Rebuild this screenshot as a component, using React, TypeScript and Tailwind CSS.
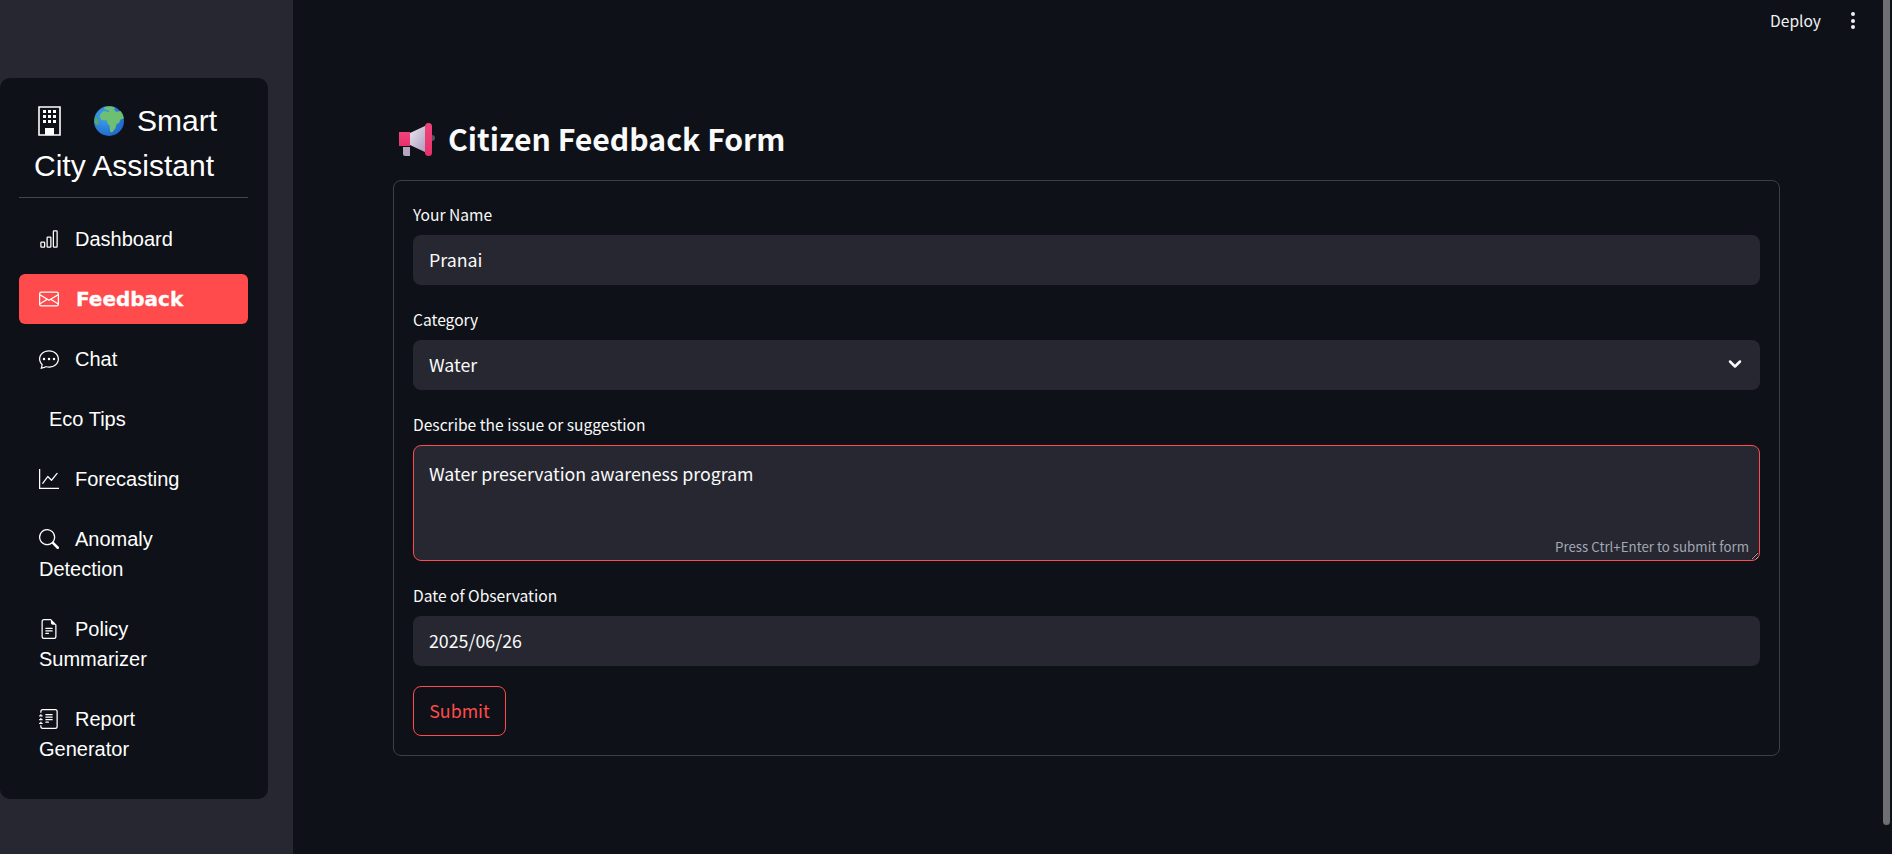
import { ChevronDown } from 'lucide-react';
import {
  BsBarChart,
  BsEnvelope,
  BsChatDots,
  BsGraphUp,
  BsSearch,
  BsFileEarmarkText,
  BsJournalText,
} from 'react-icons/bs';

const BuildingIcon = () => (
  <svg viewBox="0 0 23 30" className="inline-block h-[30px] w-[23px] align-[-5px]">
    <path fill="none" stroke="#fff" strokeWidth="1.6" d="M1 1h21v28H1z" />
    <path fill="#fff" d="M5 4h3v3H5zM10 4h3v3h-3zM15 4h3v3h-3zM5 9h3v3H5zM10 9h3v3h-3zM15 9h3v3h-3zM5 14h3v3H5zM10 14h3v3h-3zM15 14h3v3h-3zM7 22h9v7H7z" />
  </svg>
);

const GlobeIcon = () => (
  <svg viewBox="0 0 30 30" className="inline-block h-[30px] w-[30px] align-[-5px]">
    <defs>
      <radialGradient id="sea" cx="0.35" cy="0.35" r="0.8">
        <stop offset="0" stopColor="#3fa4ee" />
        <stop offset="1" stopColor="#1c5fc4" />
      </radialGradient>
    </defs>
    <circle cx="15" cy="15" r="15" fill="url(#sea)" />
    <path fill="#6fbf73" d="M10 1.5c3-1.2 8-1.3 11 .3l-1 2 2.5 2.2 4-1c2 2 3 5 3.300 7.500l-3.300 1-1.500 3.500-2.500 1-1 4-3 4c-1.500.5-2.500-.2-2.500-1.500l-.5-5-2-2-.5-3-5.500-.5-2-4 3-4.500 3.500-.5 1.500 1.500 2-1-2-1.500-3-.5z" />
    <path fill="#57a862" d="M2 10c-1.200 2-1.800 5-1.500 7l3 2.500 1.500-3z" />
  </svg>
);

const MegaphoneIcon = () => (
  <svg viewBox="0 0 36 33" className="h-[33px] w-[36px] shrink-0">
    <defs>
      <linearGradient id="cone" x1="0" x2="1" y1="0" y2="1">
        <stop offset="0" stopColor="#ece6f2" />
        <stop offset="1" stopColor="#a899b8" />
      </linearGradient>
      <linearGradient id="bell" x1="0" x2="0" y1="0" y2="1">
        <stop offset="0" stopColor="#f0447c" />
        <stop offset="1" stopColor="#e8306a" />
      </linearGradient>
    </defs>
    <path fill="#b3a7bf" d="M4 24h7v9H6a2 2 0 0 1-2-2z" />
    <circle cx="33" cy="15" r="3" fill="#55505f" />
    <path fill="url(#cone)" d="M11 10 28 2v28L11 22z" />
    <path fill="url(#bell)" d="M0 9h11v14H0z" />
    <rect x="26" y="0" width="7" height="33" rx="3.500" fill="url(#bell)" />
  </svg>
);

const navItems = [
  { icon: BsBarChart, lines: ['Dashboard'] },
  { icon: BsEnvelope, lines: ['Feedback'], active: true },
  { icon: BsChatDots, lines: ['Chat'] },
  { icon: null, lines: ['Eco Tips'] },
  { icon: BsGraphUp, lines: ['Forecasting'] },
  { icon: BsSearch, lines: ['Anomaly', 'Detection'] },
  { icon: BsFileEarmarkText, lines: ['Policy', 'Summarizer'] },
  { icon: BsJournalText, lines: ['Report', 'Generator'] },
];

const Sidebar = () => (
  <aside className="h-full w-[293px] shrink-0 bg-[#262730] pt-[78px] pr-[25px]">
    <div className="rounded-[10px] bg-[#0e1117] pt-[20px] pr-[20px] pb-[25px] pl-[19px] font-['Liberation_Sans',sans-serif] text-white">
      <h1 className="pl-[15px] text-[30px] leading-[45px] whitespace-nowrap">
        <span className="ml-[4px]" />
        <BuildingIcon />
        <span className="ml-[33px]" />
        <GlobeIcon />
        <span className="ml-[13px]">Smart</span>
        <br />
        City Assistant
      </h1>
      <div className="mt-[9px] mb-[16px] h-px bg-[#45464d]" />
      <nav className="flex flex-col gap-[10px]">
        {navItems.map(({ icon: Icon, lines, active }) => (
          <a
            key={lines[0]}
            className={
              active
                ? 'rounded-md bg-[#ff4b4b] py-[10px] pl-[20px] text-[20px] leading-[30px]'
                : 'rounded-md py-[10px] pl-[20px] text-[20px] leading-[30px]'
            }
          >
            {Icon ? (
              <Icon className="mr-[16px] inline-block h-[20px] w-[20px] align-[-3px]" />
            ) : (
              <span className="ml-[10px]" />
            )}
            {active ? (
              <span className="ml-px font-['DejaVu_Sans',sans-serif] font-bold [-webkit-text-stroke:0.3px_white]">
                {lines[0]}
              </span>
            ) : (
              lines[0]
            )}
            {lines[1] && (
              <>
                <br />
                {lines[1]}
              </>
            )}
          </a>
        ))}
      </nav>
    </div>
  </aside>
);

const Label = ({ children }: { children: string }) => (
  <label className="mb-[6px] flex h-[28px] items-center text-[15.6px]">{children}</label>
);

export default function App() {
  return (
    <div className="relative flex h-screen w-full overflow-hidden bg-[#0e1117] font-['Noto_Sans_CJK_SC','Noto_Sans',sans-serif] text-[#fafafa]">
      <Sidebar />

      <main className="min-w-0 flex-1">
        <header className="flex h-[41px] items-center justify-end pr-[37px] text-[#f0f0f2]">
          <span className="text-[15.6px]">Deploy</span>
          <span className="ml-[30px] flex flex-col gap-[2.500px]">
            <span className="h-[4px] w-[4px] rounded-full bg-[#f0f0f2]" />
            <span className="h-[4px] w-[4px] rounded-full bg-[#f0f0f2]" />
            <span className="h-[4px] w-[4px] rounded-full bg-[#f0f0f2]" />
          </span>
        </header>

        <div className="pr-[112px] pl-[100px]">
          <h2 className="mt-[65px] mb-[8px] flex h-[66px] items-center gap-[13px] pl-[6px] text-[30.200px] font-semibold">
            <MegaphoneIcon />
            Citizen Feedback Form
          </h2>

          <form className="rounded-lg border border-[#3d4044] px-[19px] pt-[20px] pb-[19px]">
            <div className="mb-[21px]">
              <Label>Your Name</Label>
              <input
                defaultValue="Pranai"
                className="h-[50px] w-full rounded-lg bg-[#262730] px-[16px] pb-[2px] text-[17.8px] outline-none"
              />
            </div>

            <div className="mb-[21px]">
              <Label>Category</Label>
              <div className="flex h-[50px] items-center justify-between rounded-lg bg-[#262730] px-[16px] pb-[2px] text-[17.8px]">
                Water
                <ChevronDown size={20} strokeWidth={3} className="-mr-px" />
              </div>
            </div>

            <div className="mb-[21px]">
              <Label>Describe the issue or suggestion</Label>
              <div className="relative">
                <textarea
                  defaultValue="Water preservation awareness program"
                  className="block h-[116px] w-full resize-y rounded-lg border border-[#ff4b4b] bg-[#262730] px-[15px] py-[15px] text-[17.8px] leading-[25px] outline-none"
                />
                <span className="absolute right-[11px] bottom-[4px] text-[13.300px] text-[#a3a8b4]">
                  Press Ctrl+Enter to submit form
                </span>
              </div>
            </div>

            <div className="mb-[20px]">
              <Label>Date of Observation</Label>
              <input
                defaultValue="2025/06/26"
                className="h-[50px] w-full rounded-lg bg-[#262730] px-[16px] pb-[2px] text-[17.8px] outline-none"
              />
            </div>

            <button
              type="button"
              className="h-[50px] w-[93px] rounded-lg border border-[#ff4b4b] pb-[2px] text-[17.8px] font-normal text-[#ff4b4b]"
            >
              Submit
            </button>
          </form>
        </div>
      </main>

      {/* page scrollbar */}
      <div className="absolute top-0 right-[2px] h-[825px] w-[7px] rounded-b-[4px] bg-[#6e6f73]" />
    </div>
  );
}
